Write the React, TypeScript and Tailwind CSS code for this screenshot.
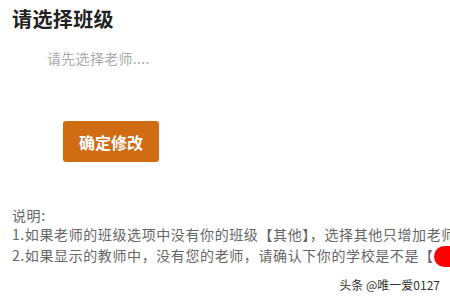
import React from "react";

export default function App() {
  return (
    <div
      className="relative w-[450px] h-[300px] overflow-hidden bg-white"
      style={{ fontFamily: '"Noto Sans CJK SC", "Liberation Sans", sans-serif' }}
    >
      <h1 className="pt-[6px] pl-[12px] text-[20px] leading-[26px] font-bold text-[#222] tracking-[0.4px]">
        请选择班级
      </h1>
      <div className="mt-[16px] pl-[47px] text-[14px] leading-[20px] text-[#aaa] tracking-[0.3px]">
        请先选择老师....
      </div>
      <button className="mt-[53px] ml-[63px] w-[96px] h-[41px] bg-[#d06c12] rounded-[3px] text-white text-[16px] font-bold flex items-center justify-center">
        确定修改
      </button>
      <div className="mt-[44px] pl-[12px] text-[14px] leading-[19px] text-[#666] whitespace-nowrap tracking-[0.6px]">
        <div>说明:</div>
        <div>1.如果老师的班级选项中没有你的班级【其他】，选择其他只增加老师</div>
        <div className="flex items-center">
          <span>2.如果显示的教师中，没有您的老师，请确认下你的学校是不是【</span>
          <span className="inline-block w-[40px] h-[21px] rounded-l-full bg-[#ff0000] shrink-0 mt-[2px]" />
        </div>
      </div>
      <div className="absolute right-[10px] bottom-[7px] text-[12px] leading-[16px] text-[#333]">
        头条 @唯一爱0127
      </div>
    </div>
  );
}
